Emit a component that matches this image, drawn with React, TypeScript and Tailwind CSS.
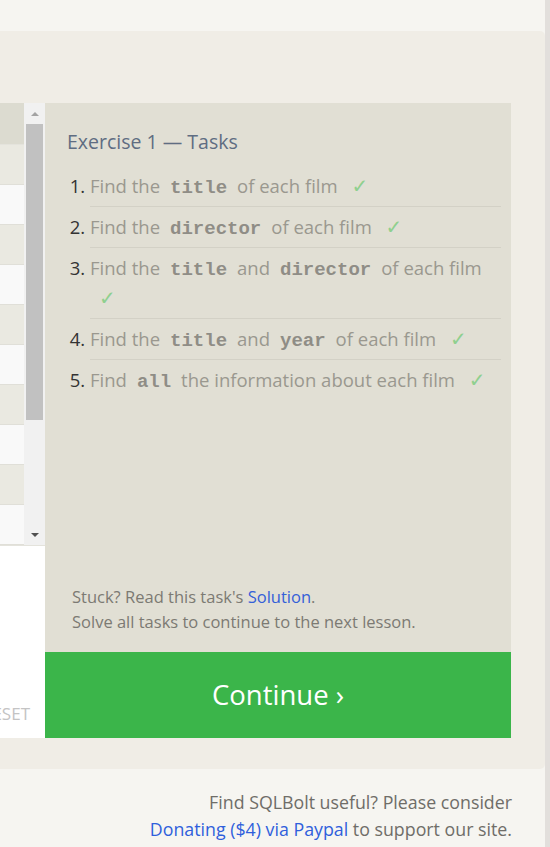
import React from 'react';

type Task = { parts: (string | { code: string })[] };

const tasks: Task[] = [
  { parts: ['Find the', { code: 'title' }, 'of each film'] },
  { parts: ['Find the', { code: 'director' }, 'of each film'] },
  { parts: ['Find the', { code: 'title' }, 'and', { code: 'director' }, 'of each film'] },
  { parts: ['Find the', { code: 'title' }, 'and', { code: 'year' }, 'of each film'] },
  { parts: ['Find', { code: 'all' }, 'the information about each film'] },
];

const sans = "font-['Open_Sans','Noto_Sans',sans-serif]";

const App: React.FC = () => {
  const rows = Array.from({ length: 10 });

  return (
    <div className={`min-h-screen flex bg-[#f6f5f1] ${sans}`}>
      <div className="flex-1 flex flex-col">
        <div className="h-[31px]" />

        <section className="bg-[#f0ede6] rounded-r-[5px] pt-[72px] pb-[31px]">
          <div className="flex">
            {/* editor column, mostly scrolled off to the left */}
            <div className="w-[45px] flex flex-col overflow-hidden">
              <div className="flex h-[443px] border-b border-[#e4e3dc]">
                <div className="w-[24px] flex flex-col">
                  <div className="h-[42px] bg-[#dcdbd0] border-b border-[#e4e3dc]" />
                  {rows.map((_, i) => (
                    <div
                      key={i}
                      className={`h-[40px] border-b border-[#e0dfd8] ${i % 2 === 0 ? 'bg-[#eae9e1]' : 'bg-[#f9f9f9]'}`}
                    />
                  ))}
                </div>
                <div className="w-[21px] bg-[#f1f1f1] flex flex-col items-center">
                  <div className="h-[21px] flex items-center justify-center">
                    <div className="w-0 h-0 border-x-[4px] border-x-transparent border-b-[4px] border-b-[#a3a3a3]" />
                  </div>
                  <div className="w-[17px] h-[296px] bg-[#c1c1c1]" />
                  <div className="flex-1" />
                  <div className="h-[21px] flex items-center justify-center">
                    <div className="w-0 h-0 border-x-[4px] border-x-transparent border-t-[4px] border-t-[#505050]" />
                  </div>
                </div>
              </div>
              <div className="bg-white h-[192px] flex items-end justify-end pr-[15px] pb-[12px] whitespace-nowrap">
                <span className="text-[17px] text-[#c4c4c4] leading-[24px]">RESET</span>
              </div>
            </div>

            {/* tasks */}
            <div className="w-[466px] flex flex-col">
              <div className="h-[549px] bg-[#e1dfd4] flex flex-col">
                <h2 className="pl-[22px] pt-[25px] text-[19.5px] leading-[28px] text-[#5f6d82]">
                  Exercise 1 — Tasks
                </h2>
                <ol className="list-decimal pl-[45px] pr-[10px] mt-[10px]">
                  {tasks.map((t, i) => (
                    <li
                      key={i}
                      className={`py-[5px] text-[18.5px] leading-[30px] text-[#9a988f] marker:text-[#333] ${i < tasks.length - 1 ? 'border-b border-[#d3d1c6]' : ''}`}
                    >
                      {t.parts.map((p, j) =>
                        typeof p === 'string' ? (
                          <span key={j}>{p}</span>
                        ) : (
                          <code
                            key={j}
                            className="font-['Liberation_Mono',monospace] font-bold text-[19px] leading-none text-[#8f8d86] mx-[10px]"
                          >
                            {p.code}
                          </code>
                        )
                      )}{' '}
                      <span className="ml-[9px] text-[20px] leading-none text-[#8fd08f] font-['DejaVu_Sans',sans-serif]">✓</span>
                    </li>
                  ))}
                </ol>
                <div className="mt-auto pl-[27px] pb-[18px] text-[16.5px] leading-[25px] text-[#7c7a73]">
                  <p>
                    Stuck? Read this task's <span className="text-[#3460d8]">Solution</span>.
                  </p>
                  <p>Solve all tasks to continue to the next lesson.</p>
                </div>
              </div>
              <button className="h-[86px] bg-[#3bb54a] text-white text-[27.5px] text-center">
                Continue ›
              </button>
            </div>
          </div>
        </section>

        <footer className="pt-[20px] pr-[33px] text-right text-[17.8px] leading-[27px] text-[#6f6d68]">
          <p>Find SQLBolt useful? Please consider</p>
          <p>
            <span className="text-[#2f5fdc]">Donating ($4) via Paypal</span> to support our site.
          </p>
        </footer>
      </div>
      <div className="w-[5px] bg-[#e2dfdc]" />
    </div>
  );
};

export default App;
